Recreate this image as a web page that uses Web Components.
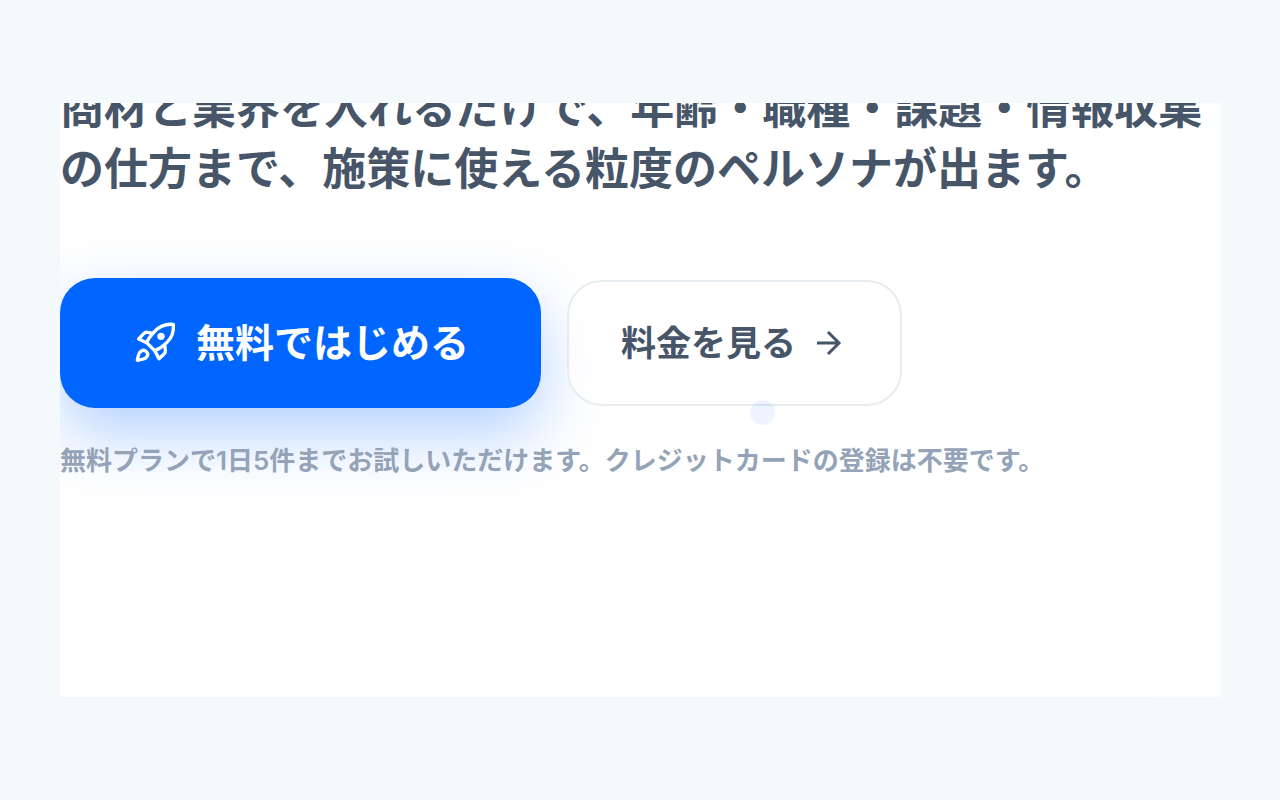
<!DOCTYPE html>
<html lang="ja">
<head>
<meta charset="utf-8">
<meta name="viewport" content="width=device-width, initial-scale=1">
<title>ペルソナ生成</title>
<style>
  body { margin: 0; min-height: 100vh; background: #f4f9fc; font-family: Inter, "Noto Sans CJK JP", sans-serif; color: #475569; }
</style>
</head>
<body>
<hero-stage>
  <hero-copy slot="copy">商材と業界を入れるだけで、年齢・職種・課題・情報収集<br>の仕方まで、施策に使える粒度のペルソナが出ます。</hero-copy>
  <cta-link slot="actions" variant="primary" href="#start"><rocket-icon slot="before"></rocket-icon>無料ではじめる</cta-link>
  <cta-link slot="actions" variant="outline" href="#pricing">料金を見る<arrow-icon slot="after"></arrow-icon></cta-link>
  <hero-note slot="note">無料プランで1日5件までお試しいただけます。クレジットカードの登録は不要です。</hero-note>
</hero-stage>
<script>
const define = (name, html, setup) => customElements.define(name, class extends HTMLElement {
  constructor() {
    super();
    this.attachShadow({ mode: 'open' }).innerHTML = html;
  }
  connectedCallback() { if (setup) setup(this); }
});

define('hero-stage', `
<style>
  :host { display: block; padding: 103px 59px 102px 60px; }
  main { overflow: hidden; background: linear-gradient(90deg, #fff 94%, #fdfeff); padding-bottom: 218px; }
  .actions { position: relative; display: flex; flex-wrap: wrap; align-items: center; gap: 26px; margin: 78px 0 35px; }
  .dot { position: absolute; left: 690px; top: 122px; width: 25px; height: 25px; border-radius: 50%; background: #0066ff; opacity: .07; }
</style>
<main>
  <slot name="copy"></slot>
  <div class="actions"><slot name="actions"></slot><span class="dot" aria-hidden="true"></span></div>
  <slot name="note"></slot>
</main>`);

define('hero-copy', `
<style>
  :host { display: block; margin-top: -25px; }
  p { margin: 0; font-size: 44px; line-height: 61px; font-weight: 600; }
</style>
<p><slot></slot></p>`);

define('hero-note', `
<style>
  :host { display: block; position: relative; color: #94a3b8; }
  p { margin: 0; font-size: 26px; line-height: 36px; font-weight: 600; }
</style>
<p><slot></slot></p>`);

define('cta-link', `
<style>
  :host { display: block; }
  a { display: flex; align-items: center; gap: 16px; box-sizing: border-box; border-radius: 35px; text-decoration: none; white-space: nowrap; }
  :host([variant="primary"]) a { padding: 37px 72px; background: #0066ff; color: #fff; font-size: 39px; line-height: 56px; font-weight: 700; box-shadow: 0 26px 65px rgba(0, 102, 255, .3); }
  :host([variant="outline"]) a { padding: 35px 52px; border: 2px solid #e7ecf0; background: rgba(255, 255, 255, .6); color: #475569; font-size: 35px; line-height: 52px; font-weight: 600; }
</style>
<a><slot name="before"></slot><span><slot></slot></span><slot name="after"></slot></a>`,
el => { el.shadowRoot.querySelector('a').href = el.getAttribute('href'); });

define('rocket-icon', `
<style>:host { display: block; width: 48px; height: 48px; } svg { display: block; }</style>
<svg width="48" height="48" viewBox="20 30 144 144" fill="none" stroke="currentColor" stroke-width="10" stroke-linejoin="round" stroke-linecap="round" aria-hidden="true">
  <path d="M144 46C122 44 103 51 88 67C76 80 68 90 64 101L88 125C101 120 113 112 125 100C140 85 146 67 144 46Z"/>
  <path d="M83 73L66 70Q60 69 55 74L40 90L64 101"/>
  <path d="M118 107L120 123Q121 130 117 134L101 149L88 125"/>
  <path d="M36 154C38 142 39 133 45 128C51 123 58 123 63 128C68 133 68 140 62 146C57 151 48 152 36 154Z"/>
  <circle cx="107" cy="82" r="11" fill="currentColor" stroke="none"/>
</svg>`);

define('arrow-icon', `
<style>:host { display: block; width: 36px; height: 36px; } svg { display: block; }</style>
<svg width="36" height="36" viewBox="0 0 36 36" fill="none" stroke="currentColor" stroke-width="3" aria-hidden="true">
  <path d="M5 18H27M16 7L27 18L16 29"/>
</svg>`);
</script>
</body>
</html>
